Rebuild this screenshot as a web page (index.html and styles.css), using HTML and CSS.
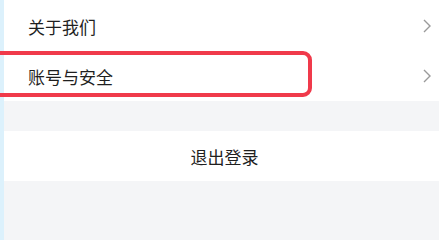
FILE: index.html
```html
<!DOCTYPE html>
<html lang="zh-CN">
<head>
<meta charset="utf-8">
<link rel="stylesheet" href="styles.css">
</head>
<body>
<div class="screen">
  <div class="list">
    <div class="row">
      <span class="label">关于我们</span>
      <svg class="chev" width="8" height="14" viewBox="0 0 8 14"><path d="M1 1 L7 7 L1 13" fill="none" stroke="#9a9a9a" stroke-width="1.4"/></svg>
    </div>
    <div class="row">
      <span class="label">账号与安全</span>
      <svg class="chev" width="8" height="14" viewBox="0 0 8 14"><path d="M1 1 L7 7 L1 13" fill="none" stroke="#9a9a9a" stroke-width="1.4"/></svg>
    </div>
    <div class="highlight"></div>
  </div>
  <div class="gap"></div>
  <div class="logout">退出登录</div>
  <div class="rest"></div>
</div>
</body>
</html>
```
FILE: styles.css
```css
html, body {
  margin: 0;
  padding: 0;
  height: 100%;
}
body {
  background: #dcf1fc;
  font-family: "Noto Sans CJK SC", "Noto Sans", sans-serif;
  overflow: hidden;
}
.screen {
  margin-left: 4px;
  min-height: 100vh;
  background: #f4f5f7;
  display: flex;
  flex-direction: column;
}
.list {
  position: relative;
  background: #fff;
}
.row {
  height: 50px;
  display: flex;
  align-items: center;
  justify-content: space-between;
  padding: 0 8px 0 24px;
}
.row:first-child {
  padding-top: 1px;
}
.label {
  font-size: 17px;
  color: #1f1f1f;
}
.chev {
  display: block;
}
.highlight {
  position: absolute;
  left: -30px;
  top: 51px;
  width: 330px;
  height: 38px;
  border: 4px solid #f03a4b;
  border-radius: 9px;
}
.gap {
  height: 30px;
}
.logout {
  height: 50px;
  background: #fff;
  display: flex;
  align-items: center;
  justify-content: center;
  padding-left: 6px;
  font-size: 17px;
  color: #1f1f1f;
}
.rest {
  flex: 1;
}
```
